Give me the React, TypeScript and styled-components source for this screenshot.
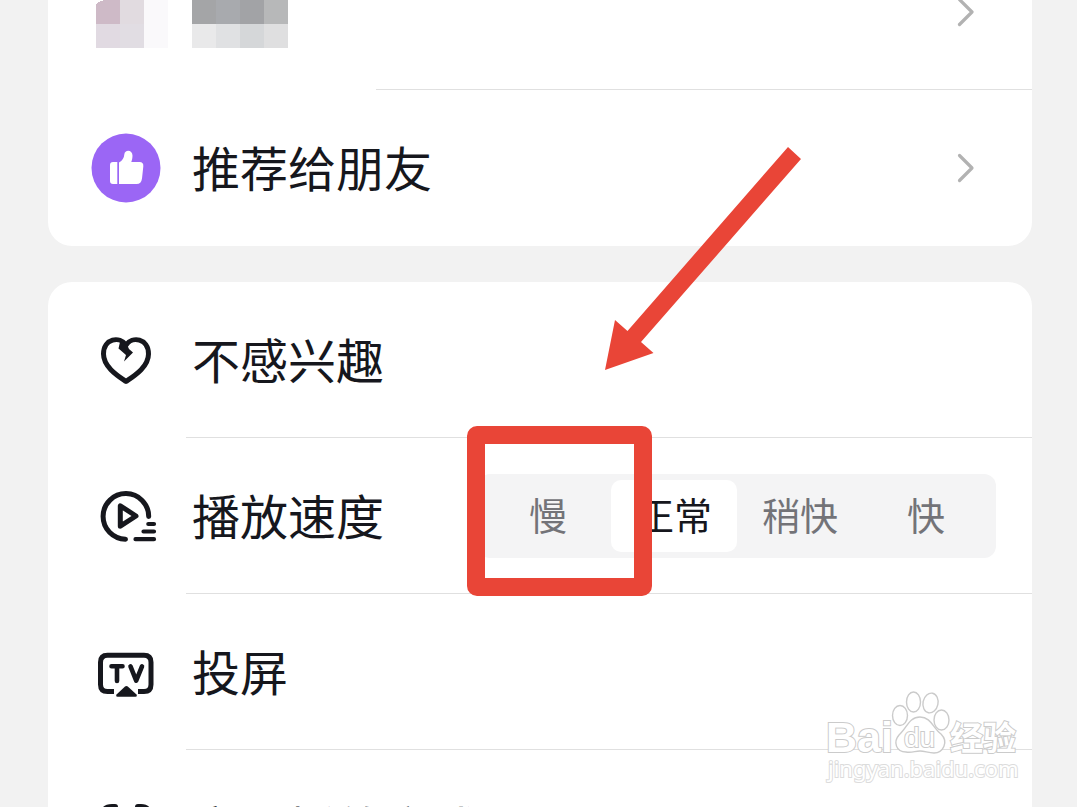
import React, { useState } from "react";
import styled, { createGlobalStyle } from "styled-components";

const GlobalStyle = createGlobalStyle`
  * { box-sizing: border-box; }
  body {
    margin: 0;
    background: #f2f2f2;
    color: #16171d;
    font-family: "Noto Sans CJK SC", sans-serif;
  }
`;

const Sheet = styled.main`
  position: relative;
  height: 100vh;
  overflow: hidden;
  padding: 0 45px 0 48px;
`;

/* The sheet is scrolled part of the way down its first row. */
const Scroller = styled.div`
  display: flex;
  flex-direction: column;
  gap: 36px;
  margin-top: -66px;
`;

const Card = styled.ul`
  position: relative;
  margin: 0;
  padding: 0;
  list-style: none;
  background: #fff;
  border-radius: 24px;
`;

const Item = styled.li<{ $inset?: number }>`
  position: relative;
  height: 156px;
  display: flex;
  align-items: center;
  &:not(:last-child)::after {
    content: "";
    position: absolute;
    left: ${(p) => p.$inset ?? 138}px;
    right: 0;
    bottom: 0;
    height: 1px;
    background: #e0e0e0;
  }
`;

const RowButton = styled.button`
  flex: 1;
  height: 100%;
  display: flex;
  align-items: center;
  padding: 0 57px 0 42px;
  border: 0;
  background: none;
  color: inherit;
  font: inherit;
  text-align: left;
`;

const RowGroup = styled.fieldset`
  flex: 1;
  min-width: 0;
  height: 100%;
  display: flex;
  align-items: center;
  margin: 0;
  padding: 0 36px 0 42px;
  border: 0;
`;

const IconSlot = styled.span`
  flex: none;
  width: 72px;
  height: 72px;
  margin-right: 30px;
  svg { display: block; }
`;

const Label = styled.span`
  flex: 1;
  padding-bottom: 4px;
  font-size: 48px;
  line-height: 72px;
  white-space: nowrap;
`;

const Segments = styled.div`
  display: grid;
  grid-template-columns: repeat(4, 126px);
  padding: 6px 7px;
  border-radius: 12px;
  background: #f4f4f5;
`;

const Segment = styled.label`
  position: relative;
  height: 72px;
  display: flex;
  align-items: center;
  justify-content: center;
  padding-bottom: 4px;
  border-radius: 10px;
  font-size: 38px;
  line-height: 56px;
  color: #737378;
  &:has(input:checked) {
    background: #fff;
    color: #16171d;
  }
  input {
    position: absolute;
    inset: 0;
    margin: 0;
    opacity: 0;
  }
`;

const Mosaic = styled.svg`
  flex: none;
  display: block;
`;

const Spacer = styled.span`
  flex: 1;
`;

const Highlight = styled.div`
  position: absolute;
  right: 380px;
  top: 144px;
  width: 185px;
  height: 170px;
  border: 18px solid #e94537;
  border-radius: 10px;
  pointer-events: none;
`;

const Arrow = styled.svg`
  position: absolute;
  right: 229px;
  top: -138px;
  pointer-events: none;
`;

const Watermark = styled.svg`
  position: absolute;
  right: 54px;
  bottom: 16px;
  pointer-events: none;
`;

const Chevron = () => (
  <svg width="20" height="32" viewBox="0 0 20 32" fill="none" stroke="#b2b2b2" strokeWidth="3.200" strokeLinecap="round" strokeLinejoin="round" aria-hidden="true">
    <path d="M4.500 3.500L17 16L4.500 28.500" />
  </svg>
);

const ink = { fill: "none", stroke: "#16171d", strokeWidth: 5, strokeLinecap: "round", strokeLinejoin: "round" } as const;

const ThumbIcon = () => (
  <svg width="72" height="72" viewBox="0 0 72 72" aria-hidden="true">
    <circle cx="36" cy="36" r="34.500" fill="#9b66f5" />
    <path fill="#fff" d="M23 30H27.300V52H23Q20 52 20 49V33Q20 30 23 30ZM29 30.500C32.500 28.500 34 26 34.300 22.500C34.700 17.300 42.500 17.500 42.500 23.500C42.500 26 42 28 41.300 30H49.500Q53.800 30 53.300 34.500L52 46.500Q51.300 52 46.500 52H29Z" />
  </svg>
);

const HeartIcon = () => (
  <svg width="72" height="72" viewBox="0 0 72 72" aria-hidden="true">
    <path {...ink} d="M36 21C30 12 13.500 14 13.500 30C13.500 43 28 52 36 57.500C44 52 58.500 43 58.500 30C58.500 14 42 12 36 21Z" />
    <path fill="#16171d" d="M30 18L36 18.500L39 25L43 28.500L34 37.500L36 31L28.500 24.500Z" />
  </svg>
);

const SpeedIcon = () => (
  <svg width="72" height="72" viewBox="0 0 72 72" aria-hidden="true">
    <g {...ink}>
      <path d="M58.700 36.500A22.800 22.800 0 1 0 35.500 59.200" />
      <path d="M30.300 25.800V46.200L46 36Z" />
      <path d="M58.300 44H64M53.500 51.500H64M45.500 59.200H64" strokeWidth="4.200" />
    </g>
  </svg>
);

const TvIcon = () => (
  <svg width="72" height="72" viewBox="0 0 72 72" aria-hidden="true">
    <g {...ink}>
      <path d="M24 55.500H17.500Q10.500 55.500 10.500 48.500V26.300Q10.500 19.300 17.500 19.300H54Q61 19.300 61 26.300V48.500Q61 55.500 54 55.500H48" strokeLinecap="butt" />
      <path d="M21.500 30.300H32.500M27 30.300V45M40.500 30.300L46.200 44.700L52 30.300" strokeWidth="4.600" />
    </g>
    <path fill="#16171d" d="M35 50.500Q36.400 49.300 37.800 50.500L46.500 58.500Q47.500 60.700 45.500 60.700H27.500Q25.500 60.700 26.500 58.500Z" />
  </svg>
);

const ScanIcon = () => (
  <svg width="72" height="72" viewBox="0 0 72 72" aria-hidden="true">
    <path {...ink} strokeWidth="6" d="M25 15H22Q13 15 13 24V29M48 15H51Q59 15 59 24V29M13 44V50Q13 58 22 58H25M48 58H51Q59 58 59 50V44" />
  </svg>
);

const speeds = ["慢", "正常", "稍快", "快"];

export default function App() {
  const [speed, setSpeed] = useState("正常");
  return (
    <Sheet>
      <GlobalStyle />
      <Scroller>
        <Card>
          <Item $inset={328}>
            <RowButton aria-label="联系人">
              <Mosaic width="200" height="72" viewBox="90 -24 200 72" shapeRendering="crispEdges" aria-hidden="true">
                <path d="M96 4Q101 0 106 0V-24H120V24H96Z" fill="#cebac7" />
                <path d="M120 -24H144V24H120Z" fill="#e1dbe0" />
                <path d="M96 24H120V48H96Z" fill="#e1dae2" />
                <path d="M120 24H144V48H120Z" fill="#e1dde3" />
                <path d="M144 -24H168V48H144Z" fill="#faf9fb" />
                <path d="M192 -24H216V24H192Z" fill="#a4a5a7" />
                <path d="M216 -24H240V24H216Z" fill="#a8aaae" />
                <path d="M240 -24H264V24H240Z" fill="#a2a3a6" />
                <path d="M264 -24H288V24H264Z" fill="#b7b8b9" />
                <path d="M192 24H216V48H192Z" fill="#e9e9ea" />
                <path d="M216 24H240V48H216Z" fill="#e0e1e3" />
                <path d="M240 24H264V48H240Z" fill="#d5d7d9" />
                <path d="M264 24H288V48H264Z" fill="#dfdfe0" />
              </Mosaic>
              <Spacer />
              <Chevron />
            </RowButton>
          </Item>
          <Item>
            <RowButton>
              <IconSlot><ThumbIcon /></IconSlot>
              <Label>推荐给朋友</Label>
              <Chevron />
            </RowButton>
          </Item>
        </Card>
        <Card>
          <Item>
            <RowButton>
              <IconSlot><HeartIcon /></IconSlot>
              <Label>不感兴趣</Label>
            </RowButton>
          </Item>
          <Item>
            <RowGroup aria-labelledby="speed-label">
              <IconSlot><SpeedIcon /></IconSlot>
              <Label id="speed-label">播放速度</Label>
              <Segments>
                {speeds.map((s) => (
                  <Segment key={s}>
                    <input type="radio" name="speed" checked={speed === s} onChange={() => setSpeed(s)} />
                    {s}
                  </Segment>
                ))}
              </Segments>
            </RowGroup>
          </Item>
          <Item>
            <RowButton>
              <IconSlot><TvIcon /></IconSlot>
              <Label>投屏</Label>
            </RowButton>
          </Item>
          <Item>
            <RowButton>
              <IconSlot><ScanIcon /></IconSlot>
              <Label>变更播放方式</Label>
            </RowButton>
          </Item>
          <Highlight />
          <Arrow width="200" height="228" viewBox="603 144 200 228" aria-hidden="true">
            <path fill="#e94537" d="M788 147L801 159L641 342L653.500 353L605 370L615 320L627.500 331Z" />
          </Arrow>
        </Card>
      </Scroller>
      <Watermark width="200" height="106" viewBox="823 685 200 106" role="img" aria-label="Baidu 经验">
        <g fill="#fff" stroke="#cbcbcb" strokeWidth="1.400">
          <g>
            <ellipse cx="900" cy="715.500" rx="7.500" ry="10" />
            <ellipse cx="913.500" cy="702" rx="7" ry="10" />
            <ellipse cx="930.500" cy="703" rx="7.500" ry="10" transform="rotate(12 930.500 703)" />
            <ellipse cx="941.500" cy="720" rx="7.500" ry="10" />
            <path d="M920 717C931 717 933 728 941 734C949 742 943 753 934 753C928 753 925 751 920 751C915 751 912 753 906 752C896 752 893 742 899 735C907 728 909 717 920 717Z" />
          </g>
          <g paintOrder="stroke" strokeWidth="2">
            <text x="826" y="752" fontFamily="Liberation Sans, sans-serif" fontWeight="700" fontSize="43">Bai</text>
            <text x="904" y="747" fontFamily="Liberation Sans, sans-serif" fontSize="28">du</text>
            <text x="950" y="750" fontFamily="Noto Sans CJK SC, sans-serif" fontWeight="700" fontSize="33">经验</text>
            <text x="828" y="777" fontFamily="Noto Sans, sans-serif" fontSize="22" stroke="#dcdcdc">jingyan.baidu.com</text>
          </g>
        </g>
      </Watermark>
    </Sheet>
  );
}
